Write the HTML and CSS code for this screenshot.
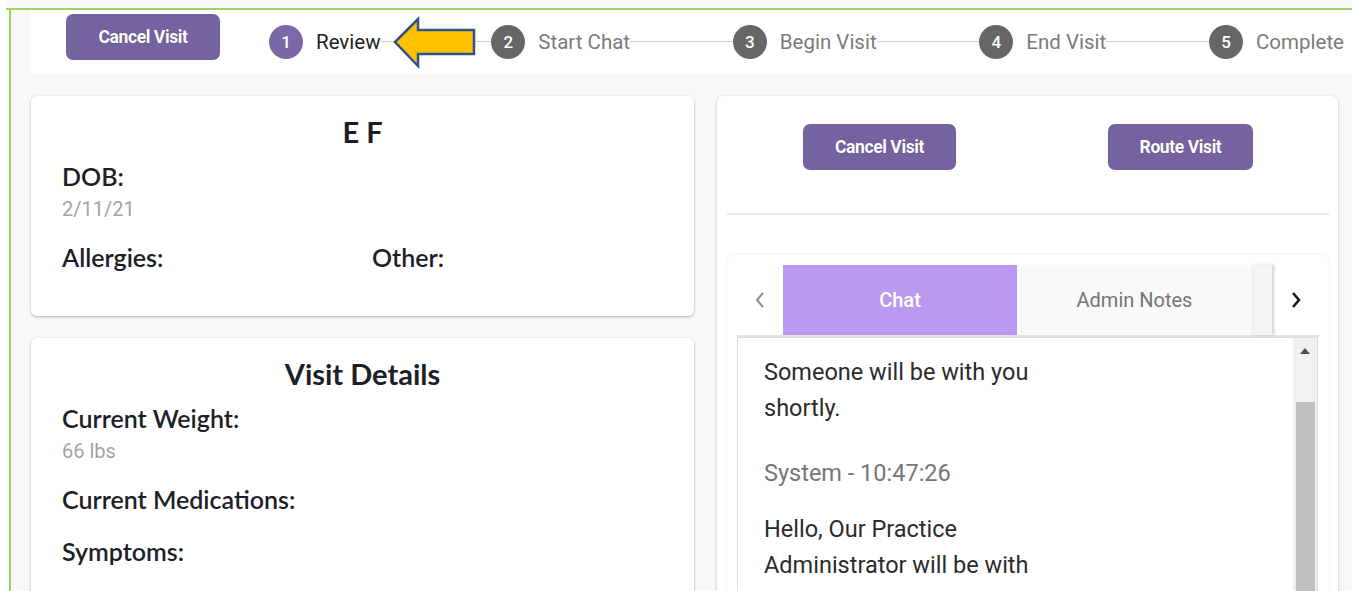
FILE: index.html
```html
<!DOCTYPE html>
<html lang="en">
<head>
<meta charset="utf-8">
<title>Visit Review</title>
<link rel="stylesheet" href="styles.css">
</head>
<body>
<div class="shot">
  <div class="frame">
    <div class="app">
      <header class="stepper-bar">
        <button class="btn btn-top">Cancel Visit</button>
        <ol class="steps">
          <li class="step active"><span class="num">1</span><span class="label">Review</span></li>
          <li class="line first"></li>
          <li class="step"><span class="num">2</span><span class="label">Start Chat</span></li>
          <li class="line"></li>
          <li class="step"><span class="num">3</span><span class="label">Begin Visit</span></li>
          <li class="line"></li>
          <li class="step"><span class="num">4</span><span class="label">End Visit</span></li>
          <li class="line"></li>
          <li class="step"><span class="num">5</span><span class="label">Complete</span></li>
        </ol>
        <svg class="arrow" width="86" height="54" viewBox="0 0 86 54" aria-hidden="true">
          <polygon points="3,26 26,3 26,14 82,14 82,38 26,38 26,50" fill="#ffc000" stroke="#2f528f" stroke-width="2.5" stroke-linejoin="miter"/>
        </svg>
      </header>
      <main class="content">
        <section class="left">
          <div class="card patient">
            <h1 class="title">E F</h1>
            <div class="field">
              <div class="flabel">DOB:</div>
              <div class="fvalue">2/11/21</div>
            </div>
            <div class="field pair">
              <div class="flabel">Allergies:</div>
              <div class="flabel">Other:</div>
            </div>
          </div>
          <div class="card visit">
            <h2 class="title">Visit Details</h2>
            <div class="field">
              <div class="flabel">Current Weight:</div>
              <div class="fvalue">66 lbs</div>
            </div>
            <div class="field">
              <div class="flabel">Current Medications:</div>
            </div>
            <div class="field sym">
              <div class="flabel">Symptoms:</div>
            </div>
          </div>
        </section>
        <section class="card right">
          <div class="actions">
            <button class="btn btn-cancel">Cancel Visit</button>
            <button class="btn btn-route">Route Visit</button>
          </div>
          <div class="divider"></div>
          <div class="tabcard">
            <div class="tabbar">
              <div class="pager prev">
                <svg width="12" height="18" viewBox="0 0 12 18" aria-hidden="true"><polyline points="9,2 3,9 9,16" fill="none" stroke="#8a8a8a" stroke-width="2"/></svg>
              </div>
              <div class="tabs">
                <div class="tab active">Chat</div>
                <div class="tab">Admin Notes</div>
                <div class="tab ghost"></div>
              </div>
              <div class="pager next">
                <svg width="12" height="18" viewBox="0 0 12 18" aria-hidden="true"><polyline points="3,2 9,9 3,16" fill="none" stroke="#1a1a1a" stroke-width="2.6"/></svg>
              </div>
            </div>
            <div class="chatbox">
              <div class="messages">
                <p class="msg">Someone will be with you shortly.</p>
                <p class="sender">System - 10:47:26</p>
                <p class="msg">Hello, Our Practice Administrator will be with you shortly.</p>
              </div>
              <div class="scroll">
                <div class="scroll-up"></div>
                <div class="scroll-thumb"></div>
              </div>
            </div>
          </div>
        </section>
      </main>
    </div>
  </div>
</div>
</body>
</html>
```

FILE: styles.css
```css
html, body {
  margin: 0;
  padding: 0;
  height: 591px;
  overflow: hidden;
  background: #ffffff;
}

.shot {
  margin-left: 6px;
  padding-top: 8px;
  background: #f8f8f8;
  height: 583px;
}

.frame {
  border-top: 2px solid #9fd262;
  background: #ffffff;
  height: 581px;
  padding-left: 3px;
}

.app {
  border-left: 2px solid #9fd262;
  background: #f8f8f8;
  height: 581px;
  padding: 0 14px 0 20px;
  box-sizing: border-box;
  overflow: hidden;
  font-family: Roboto, "Liberation Sans", sans-serif;
}

/* ---------- stepper ---------- */
.stepper-bar {
  position: relative;
  display: flex;
  align-items: center;
  height: 63px;
  background: #ffffff;
  margin-right: -14px;
}

.btn {
  border: 0;
  border-radius: 7px;
  background: #7563a0;
  color: #ffffff;
  font-family: Roboto, "Liberation Sans", sans-serif;
  font-weight: 700;
  font-size: 17.5px;
  letter-spacing: -0.4px;
  height: 46px;
  padding: 0;
  text-shadow: 0 0 1px rgba(60, 40, 100, 0.6);
}

.btn-top {
  align-self: flex-start;
  margin-top: 4px;
  margin-left: 35px;
  width: 154px;
}

.steps {
  flex: 1;
  display: flex;
  align-items: center;
  list-style: none;
  margin: 0 8px 0 49px;
  padding: 0;
}

.step {
  display: flex;
  align-items: center;
  gap: 13px;
}

.num {
  width: 34px;
  height: 34px;
  border-radius: 50%;
  background: #666666;
  color: #ffffff;
  font-size: 17px;
  font-weight: 500;
  display: flex;
  align-items: center;
  justify-content: center;
}

.step.active .num {
  background: #7b68a6;
}

.label {
  font-size: 20.5px;
  color: #7a7a7a;
}

.step.active .label {
  color: #222222;
}

.line {
  flex: 1 1 0;
  height: 1px;
  background: #d2d2d2;
}

.line.first {
  flex: 1 1 8px;
}

.arrow {
  position: absolute;
  left: 361px;
  top: 6px;
}

/* ---------- content ---------- */
.content {
  display: flex;
  gap: 23px;
  margin-top: 23px;
}

.left {
  width: 664px;
  display: flex;
  flex-direction: column;
  gap: 22px;
}

.card {
  background: #ffffff;
  border-radius: 6px;
  box-shadow: 0 1px 3px rgba(0, 0, 0, 0.28);
  box-sizing: border-box;
}

.patient {
  height: 220px;
  padding: 19px 31px 0;
}

.visit {
  height: 400px;
  padding: 19px 31px 0;
}

.title {
  margin: 0;
  text-align: center;
  font-family: Lato, "Liberation Sans", sans-serif;
  font-weight: 700;
  font-size: 29px;
  line-height: 34px;
  color: #1e1e28;
}

.field {
  margin-top: 20px;
}

.title + .field {
  margin-top: 12px;
}

.visit .title + .field {
  margin-top: 12px;
}

.patient .pair {
  margin-top: 20px;
}

.field.sym {
  margin-top: 22px;
}

.pair {
  display: grid;
  grid-template-columns: 310px 1fr;
}

.flabel {
  font-family: Lato, "Liberation Sans", sans-serif;
  font-weight: 600;
  font-size: 25px;
  line-height: 30px;
  color: #1e1e28;
}

.fvalue {
  margin-top: 5px;
  font-size: 20px;
  line-height: 26px;
  color: #a2a2ac;
}

/* ---------- right card ---------- */
.right {
  flex: 1;
  height: 600px;
  padding: 28px 9px 0 10px;
}

.actions {
  display: grid;
  grid-template-columns: 1fr 1fr;
  justify-items: center;
  margin: 0 -2px 0 2px;
}

.btn-cancel {
  width: 153px;
}

.btn-route {
  width: 145px;
}

.divider {
  margin-top: 43px;
  height: 2px;
  background: #e8e8e8;
}

.tabcard {
  margin-top: 40px;
  padding: 10px 9px 0 10px;
  border-radius: 6px;
  box-shadow: 0 0 3px rgba(0, 0, 0, 0.12);
  height: 400px;
  box-sizing: border-box;
}

.tabbar {
  display: flex;
  height: 70px;
  border-bottom: 2px solid #e4e4e4;
}

.pager {
  display: flex;
  align-items: center;
  justify-content: center;
}

.pager.prev {
  width: 46px;
}

.pager.next {
  width: 48px;
}

.tabs {
  flex: 1;
  display: flex;
}

.tab {
  width: 235px;
  display: flex;
  align-items: center;
  justify-content: center;
  background: #f9f9f9;
  color: #757575;
  font-size: 20px;
}

.tab.active {
  width: 234px;
  background: #bc98f1;
  color: #ffffff;
  font-weight: 500;
}

.tab.ghost {
  width: 19px;
  flex: none;
  background: #f4f4f4;
  border-left: 1px solid #ececec;
  box-shadow: 2px 0 3px rgba(0, 0, 0, 0.18);
}

.chatbox {
  display: flex;
  margin-right: 2px;
  border: 1px solid #dcdcdc;
  height: 300px;
}

.messages {
  flex: 1;
  padding: 16px 0 0 26px;
}

.messages p {
  margin: 0;
  font-size: 23.5px;
  line-height: 36px;
  max-width: 290px;
}

.msg {
  color: #2b2b2b;
}

.sender {
  color: #767676;
  margin-top: 29px !important;
  margin-bottom: 20px !important;
}

.scroll {
  width: 24px;
  background: #f1f1f1;
  display: flex;
  flex-direction: column;
  align-items: center;
}

.scroll-up {
  margin-top: 10px;
  width: 0;
  height: 0;
  border-left: 5px solid transparent;
  border-right: 5px solid transparent;
  border-bottom: 6px solid #505050;
}

.scroll-thumb {
  margin-top: 48px;
  width: 19px;
  flex: 1;
  background: #c1c1c1;
}
```
